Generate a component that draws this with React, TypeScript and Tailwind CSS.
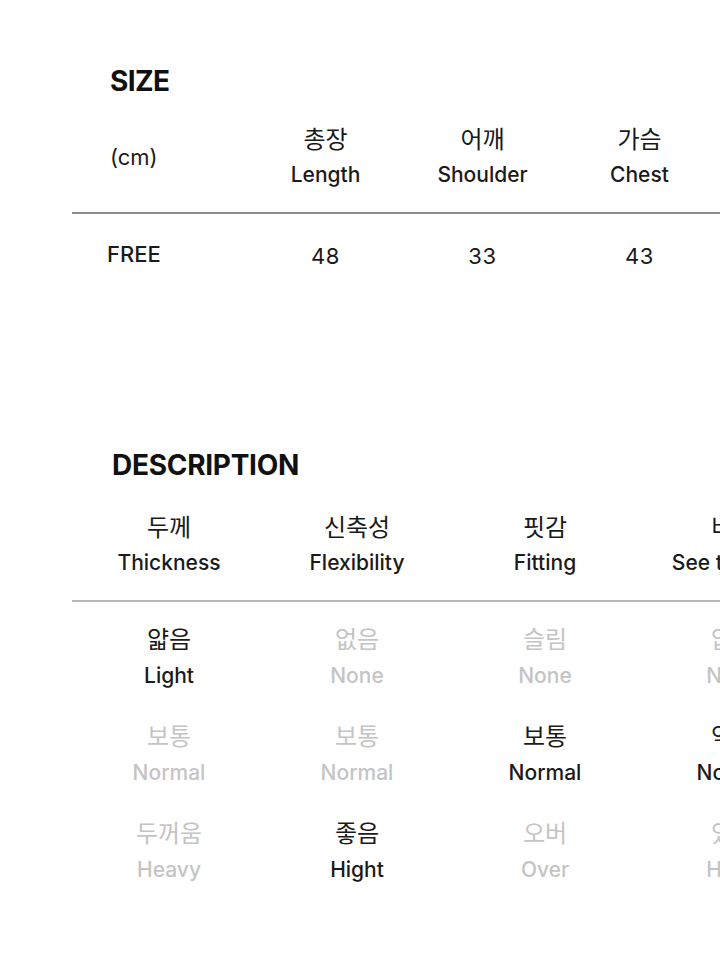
import React from "react";

const font = {
  fontFamily: '"Inter", "Noto Sans CJK KR", sans-serif',
};

interface Cell {
  ko: string;
  en: string;
  active?: boolean;
}

const sizeHeads: Cell[] = [
  { ko: "총장", en: "Length" },
  { ko: "어깨", en: "Shoulder" },
  { ko: "가슴", en: "Chest" },
];

const sizeValues = ["48", "33", "43"];

const descHeads: Cell[] = [
  { ko: "두께", en: "Thickness" },
  { ko: "신축성", en: "Flexibility" },
  { ko: "핏감", en: "Fitting" },
  { ko: "비침", en: "See through" },
];

// rows of the description table, one entry per column
const descRows: Cell[][] = [
  [
    { ko: "얇음", en: "Light", active: true },
    { ko: "없음", en: "None" },
    { ko: "슬림", en: "None" },
    { ko: "없음", en: "None" },
  ],
  [
    { ko: "보통", en: "Normal" },
    { ko: "보통", en: "Normal" },
    { ko: "보통", en: "Normal", active: true },
    { ko: "약간", en: "Normal", active: true },
  ],
  [
    { ko: "두꺼움", en: "Heavy" },
    { ko: "좋음", en: "Hight", active: true },
    { ko: "오버", en: "Over" },
    { ko: "있음", en: "Hight" },
  ],
];

const TwoLine: React.FC<{ cell: Cell; faint?: boolean; tall?: boolean }> = ({ cell, faint, tall }) => (
  <div
    className={`flex flex-col items-center whitespace-nowrap font-medium ${
      tall ? "leading-[36px]" : "leading-[35px]"
    } ${faint ? "text-[#c4c4c4]" : "text-[#1a1a1a]"}`}
  >
    <span className="text-[24px] font-normal">{cell.ko}</span>
    <span className="text-[21px]">{cell.en}</span>
  </div>
);

export default function App() {
  return (
    <div className="w-[720px] h-[960px] bg-white overflow-hidden" style={font}>
      {/* SIZE */}
      <section className="pt-[64px] pl-[72px]">
        <h2 className="ml-[38px] text-[28px] leading-[34px] font-bold tracking-[-0.02em] text-[#111]">
          SIZE
        </h2>
        <div className="mt-[24px] w-[700px] border-b-2 border-[#8c8c8c] pb-[20px] grid grid-cols-[175px_157px_157px_157px]">
          <div className="flex items-center pl-[38px] text-[22px] text-[#1a1a1a]">(cm)</div>
          {sizeHeads.map((h) => (
            <TwoLine key={h.en} cell={h} />
          ))}
        </div>
        <div className="mt-[23px] w-[700px] grid grid-cols-[175px_157px_157px_157px] text-[22px] leading-[35px] text-[#1a1a1a]">
          <div className="pl-[35px] font-medium">FREE</div>
          {sizeValues.map((v, i) => (
            <div key={i} className="text-center translate-y-[2px] tracking-[0.03em]">
              {v}
            </div>
          ))}
        </div>
      </section>

      {/* DESCRIPTION */}
      <section className="mt-[176px] pl-[72px]">
        <h2 className="ml-[40px] text-[28px] leading-[34px] font-bold tracking-[-0.01em] text-[#111]">
          DESCRIPTION
        </h2>
        <div className="mt-[28px] w-[840px] border-b-2 border-[#b8b8b8] pb-[20px] pl-[3px] grid grid-cols-[188px_188px_188px_188px]">
          {descHeads.map((h) => (
            <TwoLine key={h.en} cell={h} />
          ))}
        </div>
        <div className="mt-[20px] w-[840px] pl-[3px] flex flex-col gap-[25px]">
          {descRows.map((row, r) => (
            <div key={r} className="grid grid-cols-[188px_188px_188px_188px]">
              {row.map((c, i) => (
                <TwoLine key={i} cell={c} faint={!c.active} tall />
              ))}
            </div>
          ))}
        </div>
      </section>
    </div>
  );
}
